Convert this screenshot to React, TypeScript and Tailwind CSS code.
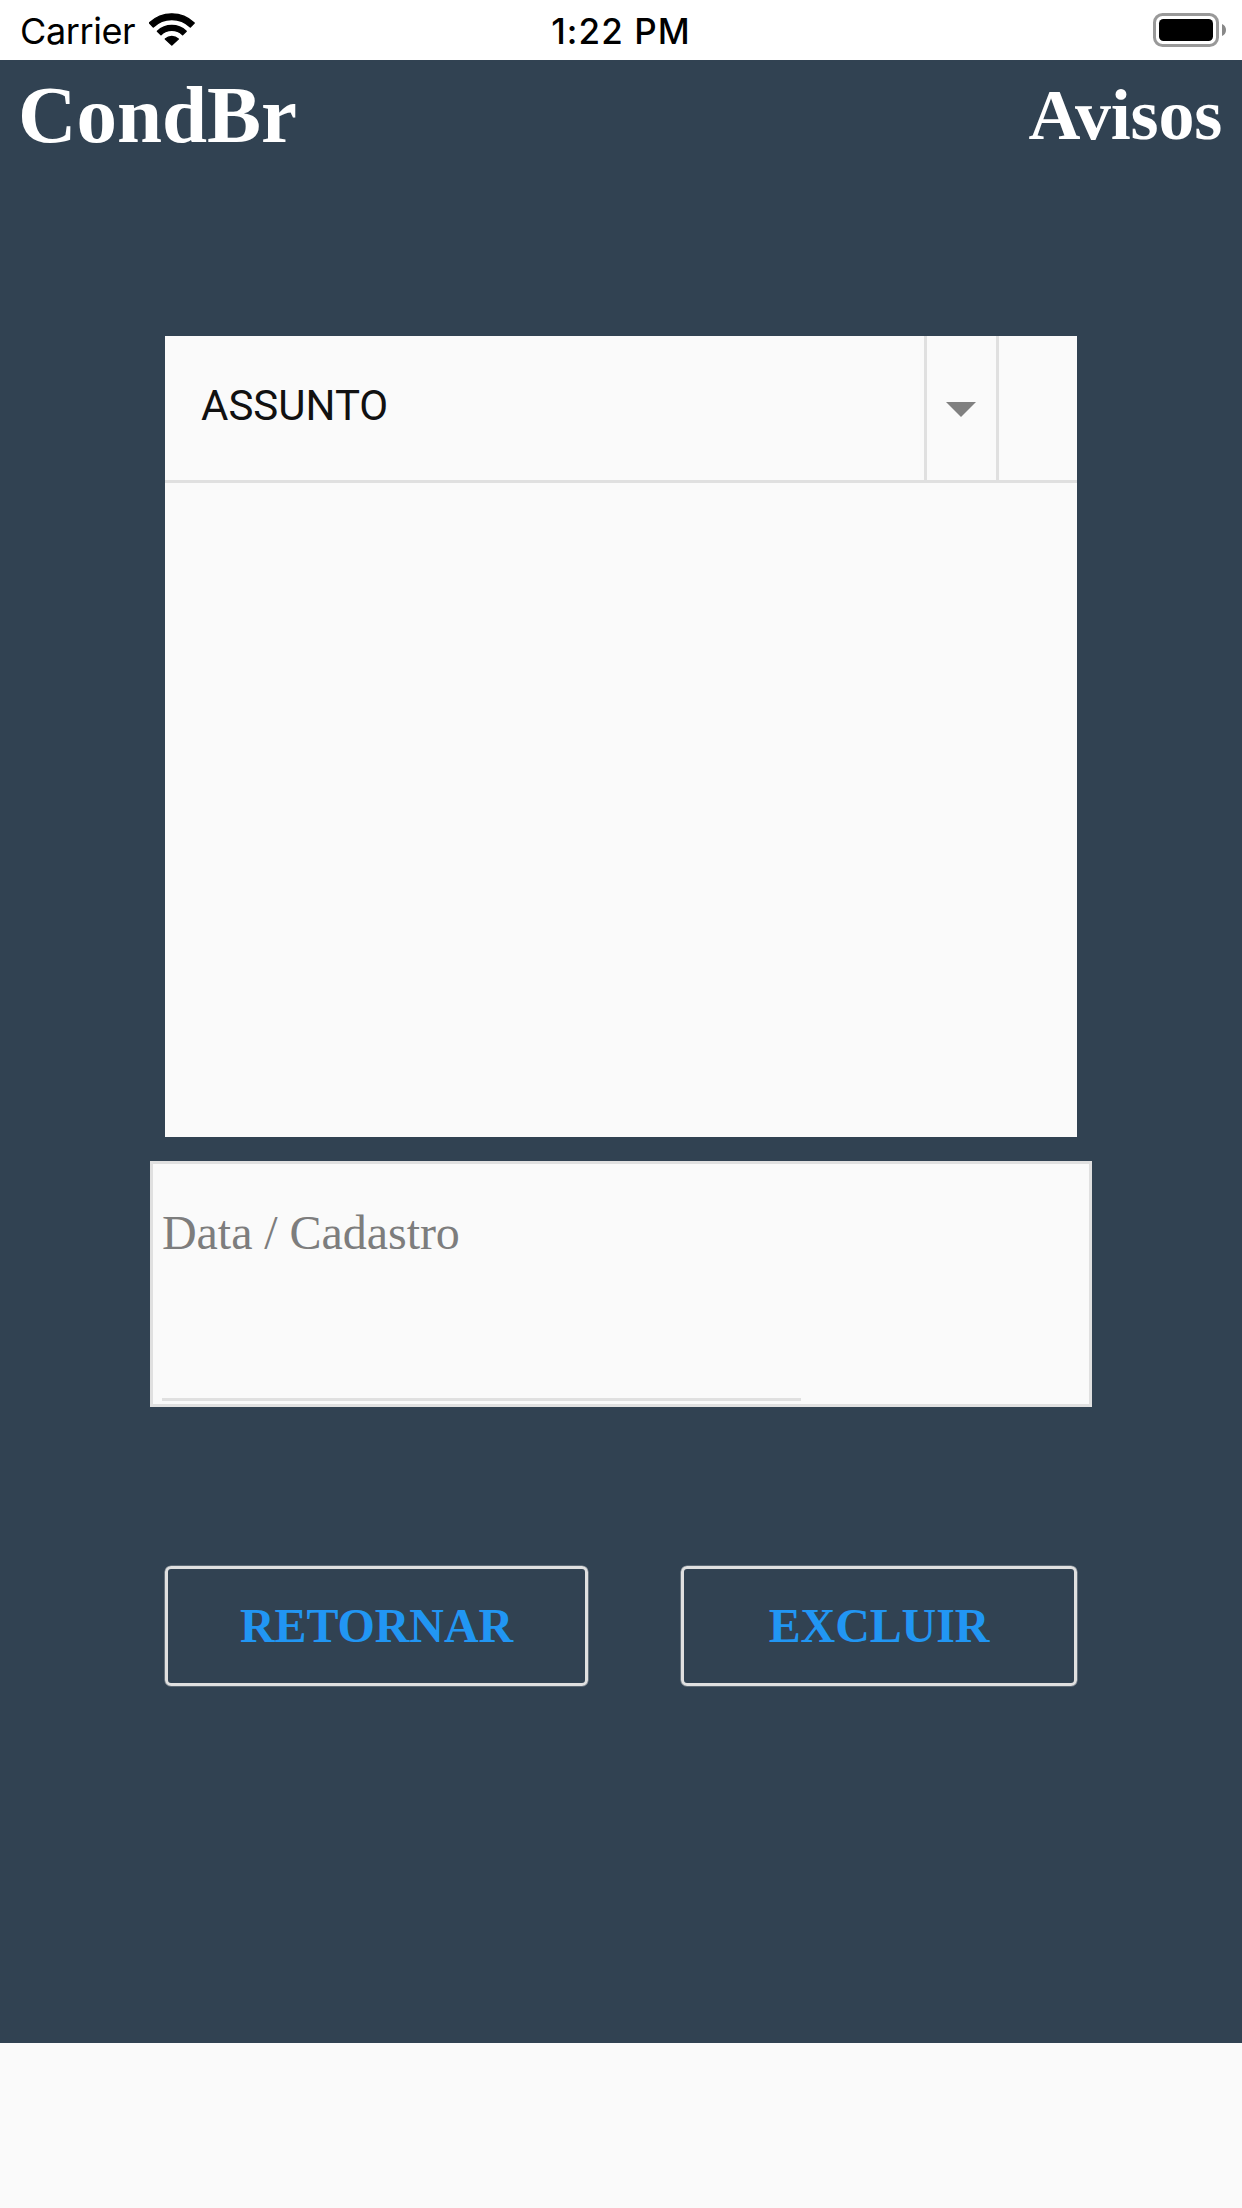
function WifiIcon() {
  return (
    <svg
      className="ml-[12.500px] h-[34px] w-[46px]"
      viewBox="0 0 46 34"
      fill="#000"
      stroke="#000"
      strokeWidth="1.400"
      strokeLinejoin="round"
    >
      <path d="M0.400 9.900A32.300 32.300 0 0 1 45.200 9.900L41.300 13.900A26.700 26.700 0 0 0 4.300 13.900Z" />
      <path d="M8.400 18.200A21 21 0 0 1 37.200 18.200L33.600 21.700A15.700 15.700 0 0 0 12 21.700Z" />
      <path d="M16.300 26A9.600 9.600 0 0 1 29.300 26L22.800 32Z" />
    </svg>
  );
}

function BatteryIcon() {
  return (
    <svg className="h-[34px] w-[73px]" viewBox="0 0 73 34">
      <rect x="1.500" y="1.500" width="63" height="31" rx="8" fill="none" stroke="#999" strokeWidth="3" />
      <rect x="6" y="6" width="54" height="22" rx="4.500" fill="#000" />
      <path d="M69 11c2.500 1 4 3.300 4 6s-1.500 5-4 6z" fill="#888" />
    </svg>
  );
}

function StatusBar() {
  return (
    <div className="grid h-[60px] grid-cols-3 items-center bg-white font-['Inter',sans-serif] text-black">
      <div className="flex items-center pl-[20px]">
        <span className="relative top-px w-[116.500px] whitespace-nowrap text-[36px] leading-[44px] tracking-[-0.400px]">Carrier</span>
        <WifiIcon />
      </div>
      <span className="relative top-px text-center text-[35px] leading-[44px] font-medium tracking-[1.100px]">1:22 PM</span>
      <div className="flex justify-end pr-[16px]">
        <BatteryIcon />
      </div>
    </div>
  );
}

function ActionButton({ label, width }: { label: string; width: string }) {
  return (
    <button
      type="button"
      className={`${width} flex h-[120px] items-center justify-center rounded-[6px] border-[3px] border-[#e0e0e0] pb-px text-[48px] leading-[54px] font-bold tracking-[-0.100px] text-[#2196f3] shadow-[0_0_0_0.600px_rgba(224,224,224,0.500)]`}
    >
      {label}
    </button>
  );
}

export default function App() {
  return (
    <div className="flex h-[2208px] w-[1242px] flex-col bg-[#fafafa] font-['Liberation_Serif',serif]">
      <StatusBar />
      <main className="flex h-[1983px] flex-col items-center bg-[#314252]">
        <header className="flex h-[108px] w-full items-center justify-between pt-[2px] pr-[20px] pl-[18px] font-bold text-white">
          <h1 className="text-[81px] leading-[90px]">CondBr</h1>
          <h2 className="text-[72px] leading-[80px] tracking-[-0.200px]">Avisos</h2>
        </header>

        <section className="mt-[168px] h-[801px] w-[912px] bg-[#fafafa] font-['Roboto',sans-serif]">
          <div className="flex h-[147px] border-b-[3px] border-[#e0e0e0]">
            <div className="flex flex-1 items-center pb-[4px] pl-[36px] text-[42px] leading-[48px] text-[#111]">
              ASSUNTO
            </div>
            <div className="flex w-[75px] border-x-[3px] border-[#e0e0e0] pt-[66px] pl-[19px]">
              <svg className="h-[15px] w-[30px]" viewBox="0 0 30 15">
                <path d="M0 0h30L15 15z" fill="#808080" />
              </svg>
            </div>
            <div className="w-[78px]" />
          </div>
        </section>

        <section className="mt-[24px] flex h-[246px] w-[942px] flex-col justify-between border-[3px] border-[#e0e0e0] bg-[#fafafa] px-[9px] pt-[42px] pb-[3px]">
          <label className="text-[48px] leading-[54px] tracking-[-0.050px] text-[#7d7d7d]">Data / Cadastro</label>
          <div className="h-[3px] w-[639px] bg-[#e0e0e0]" />
        </section>

        <div className="mt-[159px] flex w-[912px] justify-between">
          <ActionButton label="RETORNAR" width="w-[423px]" />
          <ActionButton label="EXCLUIR" width="w-[396px]" />
        </div>
      </main>
    </div>
  );
}
